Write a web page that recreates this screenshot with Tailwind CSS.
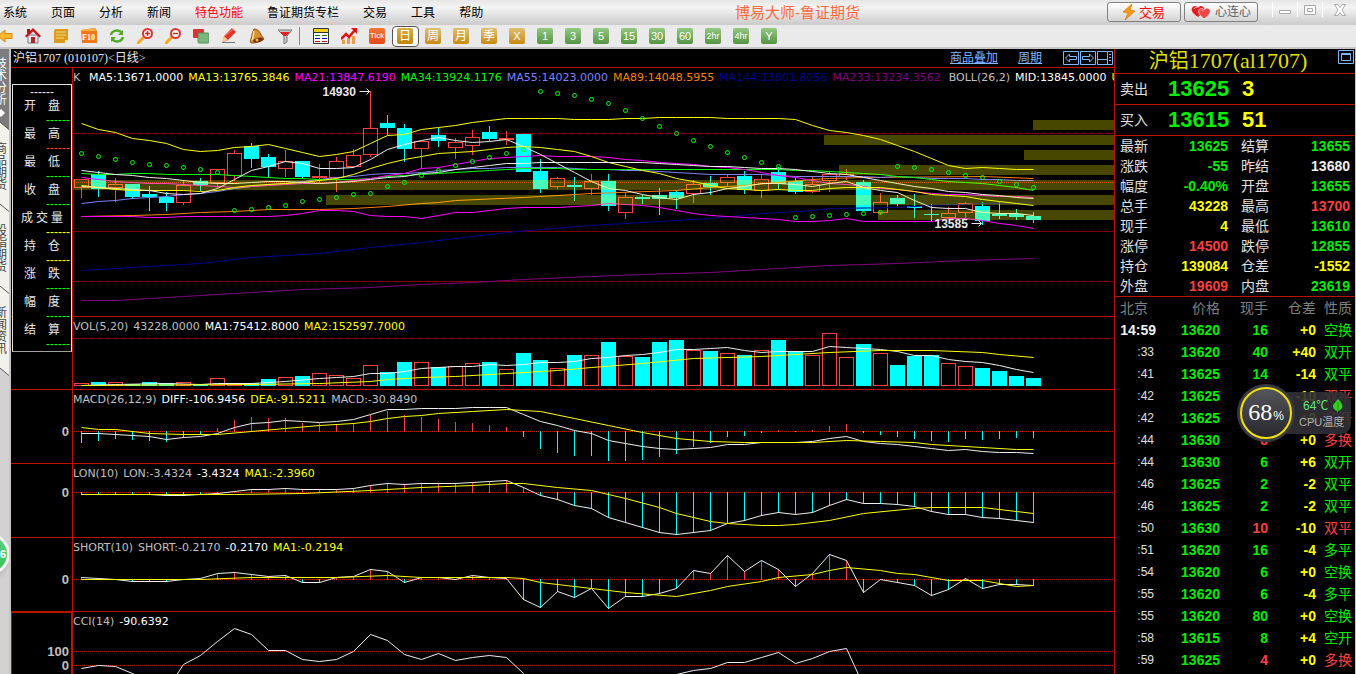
<!DOCTYPE html>
<html lang="zh-CN">
  <head>
    <meta charset="UTF-8" />
    <title>博易大师-鲁证期货</title>
    <script src="https://cdn.jsdelivr.net/npm/@tailwindcss/browser@4"></script>
  </head>
  <body class="h-screen flex flex-col overflow-hidden bg-black text-[12px] leading-none font-['Liberation_Sans','Noto_Sans_CJK_SC',sans-serif]">
    <!-- Menú principal -->
    <header class="relative flex items-center justify-between h-[25px] shrink-0 bg-linear-to-b from-[#e6e6e6] via-[#f4f4f4] via-30% to-[#cbcbcb]">
      <nav class="flex gap-6 pl-[3px] text-black">
        <a href="#">系统</a>
        <a href="#">页面</a>
        <a href="#">分析</a>
        <a href="#">新闻</a>
        <a href="#" class="text-[#ff0000]">特色功能</a>
        <a href="#">鲁证期货专栏</a>
        <a href="#">交易</a>
        <a href="#">工具</a>
        <a href="#">帮助</a>
      </nav>
      <h1 class="absolute left-[735px] text-[15px] text-[#ff6a3c]">博易大师-鲁证期货</h1>
      <div class="flex items-start gap-[3px] h-full pt-[2px]">
        <button class="flex items-center justify-center gap-1 w-[74px] h-5 border border-[#808080] rounded-[3px] bg-linear-to-b from-white to-[#d4d4d4] text-[13px] text-[#ff0000]">
          <svg class="w-3 h-4" viewBox="0 0 12 16"><path d="M9 0 0 8l5 1-3 7 10-9-5-1z" fill="#ff9a10" stroke="#c86a00" stroke-width=".6" /></svg>
          交易
        </button>
        <button class="flex items-center justify-center gap-1 w-[74px] h-5 border border-[#808080] rounded-[3px] bg-linear-to-b from-white to-[#d4d4d4] text-[12px] text-[#606060]">
          <svg class="w-5 h-4" viewBox="0 0 20 16"><path d="M7 13C1 9 0 6 1 4s4-3 6 0c2-3 5-2 6 0s0 5-6 9z" fill="#e02020" /><path d="M13 15C8 11 7 8 8 6s4-2 5 0c2-3 5-2 6 0s0 5-6 9z" fill="#f04848" stroke="#fff" stroke-width=".7" /><path d="M3 5c1-2 2-2 3-1M10 7c1-1 1-1 2 0" stroke="#ffc0c0" fill="none" /></svg>
          心连心
        </button>
        <div class="flex h-[15px] ml-[11px] text-[#a8a8a8]">
          <button aria-label="最小化" class="w-[25px] h-full border-l border-white flex items-center justify-center">
            <svg class="w-3 h-3" viewBox="0 0 12 12"><path d="M.5 6.500h11v3H.5z" fill="#fff" stroke="currentColor" /></svg>
          </button>
          <button aria-label="最大化" class="w-[25px] h-full border-l border-white flex items-center justify-center">
            <svg class="w-3 h-3" viewBox="0 0 12 12"><path d="M.5 1.500h11v9H.5zM3.500 4.500h5v3h-5z" fill="#fff" stroke="currentColor" /></svg>
          </button>
          <button aria-label="关闭" class="w-[34px] h-full border-l border-white flex items-center justify-center">
            <svg class="w-3 h-3" viewBox="0 0 12 12"><path d="M.5.5h3.500L6 3.500 8 .5h3.500L8 6l3.500 5.500H8L6 8.500 4 11.500H.5L4 6z" fill="#fff" stroke="currentColor" /></svg>
          </button>
        </div>
      </div>
    </header>

    <!-- Barra de herramientas -->
    <div class="flex items-center h-[24px] shrink-0 bg-[#eaeaea] border-b-2 border-[#c9c5c5] overflow-hidden">
      <div class="flex -ml-[9px]">
        <button aria-label="后退" class="w-7 flex justify-center"><svg class="w-4 h-4" viewBox="0 0 16 16"><path d="M1 8 8 2v3.500h7v5H8V14z" fill="#f7b731" stroke="#d08a10" /></svg></button>
        <button aria-label="首页" class="w-7 flex justify-center"><svg class="w-4 h-4" viewBox="0 0 16 16"><path d="M3 7h10v8H3z" fill="#e8e8ee" stroke="#777" /><path d="M0 8 8 0l8 8-1.500 1.500L8 3.500 1.500 9.500z" fill="#c4161c" /><path d="M2 1h3v3L2 6z" fill="#b01015" /><path d="M6 9h4v6H6z" fill="#b5222a" /></svg></button>
        <button aria-label="公告" class="w-7 flex justify-center"><svg class="w-4 h-4" viewBox="0 0 16 16"><path d="M2 1h13v11l-3 3H1V3z" fill="#dc9a20" /><path d="M3 4h10M3 7h10M3 10h8" stroke="#f8d878" /><path d="M15 12h-3v3z" fill="#fff0b0" /></svg></button>
        <button aria-label="F10" class="w-7 flex justify-center"><svg class="w-4 h-4" viewBox="0 0 16 16"><path d="M0 2 14 0l2 3v12H1z" fill="#f07818" /><path d="M0 2 14 0l1 3H0z" fill="#f8b040" /><text x="1" y="12" font-size="8" font-weight="bold" fill="#fff" font-family="Liberation Serif">F10</text></svg></button>
        <button aria-label="刷新" class="w-7 flex justify-center"><svg class="w-4 h-4" viewBox="0 0 16 16" fill="none" stroke="#4faa28" stroke-width="2.500"><path d="M2 7c1-5 8-6 11-2M14 9c-1 5-8 6-11 2" /><path d="M14 2v5H9zM2 14V9h5z" fill="#4faa28" stroke="none" /></svg></button>
        <button aria-label="放大" class="w-7 flex justify-center"><svg class="w-4 h-4" viewBox="0 0 16 16"><path d="m1 15 6-6" stroke="#f5a71c" stroke-width="3" stroke-linecap="round" /><circle cx="10.500" cy="5.500" r="4.500" fill="#fff" stroke="#e03030" stroke-width="2" /><path d="M8 5.500h5M10.500 3v5" stroke="#e02020" stroke-width="1.500" /></svg></button>
        <button aria-label="缩小" class="w-7 flex justify-center"><svg class="w-4 h-4" viewBox="0 0 16 16"><path d="m1 15 6-6" stroke="#f5a71c" stroke-width="3" stroke-linecap="round" /><circle cx="10.500" cy="5.500" r="4.500" fill="#fff" stroke="#e03030" stroke-width="2" /><path d="M8 5.500h5" stroke="#e02020" stroke-width="1.500" /></svg></button>
        <button aria-label="叠加" class="w-7 flex justify-center"><svg class="w-4 h-4" viewBox="0 0 16 16"><rect x="0" y="1" width="11" height="9" rx="1" fill="#d8343c" /><rect x="5" y="5" width="11" height="10" rx="1" fill="#7bb77c" stroke="#4e8e54" /></svg></button>
        <button aria-label="画线" class="w-7 flex justify-center"><svg class="w-4 h-4" viewBox="0 0 16 16"><path d="m2 14 1-6 8-8 4 4-8 8z" fill="#e2362c" /><path d="m4 8 8-7" stroke="#f88070" /><path d="m1 14 2-6 4 4z" fill="#f0c890" /><path d="M1 14.500h13" stroke="#777" /></svg></button>
        <button aria-label="预警" class="w-7 flex justify-center"><svg class="w-4 h-4" viewBox="0 0 16 16"><path d="M5 1c4 0 6 3 7 6l3 4c-3 3-8 4-13 4C0 13 3 10 3 6z" fill="#d8912c" stroke="#8e4c10" /><path d="M5 3c-1 3 0 6-2 9" stroke="#f8dc90" stroke-width="1.500" fill="none" /><ellipse cx="9" cy="12" rx="5" ry="2" transform="rotate(-14 9 12)" fill="#7a2a10" /><circle cx="8" cy="12" r="1.500" fill="#f0c050" /></svg></button>
        <button aria-label="筛选" class="w-7 flex justify-center"><svg class="w-4 h-4" viewBox="0 0 16 16"><path d="M1 2h14l-5 6v6l-3 2V8z" fill="#c8c8c8" stroke="#777" /><path d="M3 4h10L9 8H7z" fill="#e02020" /></svg></button>
      </div>
      <div class="w-2 flex justify-start"><span class="w-px h-[18px] bg-[#888]"></span></div>
      <div class="flex items-center">
        <button aria-label="报价" class="w-7 flex justify-center"><svg class="w-4 h-4" viewBox="0 0 16 16"><path d="M.5.5h15v15H.5z" fill="#fff" stroke="#333" /><path d="M1 2.500h14" stroke="#f4d020" stroke-width="3" /><path d="M0 4.500h16" stroke="#333" /><path d="M2 7.500h5M9 7.500h5" stroke="#008000" /><path d="M2 10.500h5M9 10.500h5" stroke="#0000c0" /><path d="M2 13.500h5M9 13.500h5" stroke="#c00000" /></svg></button>
        <button aria-label="走势" class="w-7 flex justify-center"><svg class="w-4 h-4" viewBox="0 0 16 16"><path d="M1 12h3v4H1zM6 10h3v6H6zM11 8h3v8h-3z" fill="#e8a040" /><path d="m0 11 5-5 3 3 6-7" stroke="#e01010" stroke-width="2.500" fill="none" /><path d="M10 0h6v6z" fill="#e01010" /></svg></button>
        <button class="w-7 flex justify-center"><span class="w-4 h-4 rounded-[2px] bg-linear-to-b from-[#f07838] to-[#e04818] text-white text-[8px] leading-4">Tick</span></button>
        <button class="w-7 flex justify-center"><span class="w-[27px] h-[21px] rounded-[4px] border border-[#555] bg-white flex items-center justify-center"><span class="w-4 h-4 rounded-[2px] bg-linear-to-b from-[#d9b040] to-[#c08408] text-white text-[12px] leading-4">日</span></span></button>
        <button class="w-7 flex justify-center"><span class="w-4 h-4 rounded-[2px] bg-linear-to-b from-[#dcc070] to-[#c88a00] text-white text-[12px] leading-4">周</span></button>
        <button class="w-7 flex justify-center"><span class="w-4 h-4 rounded-[2px] bg-linear-to-b from-[#dcc070] to-[#c88a00] text-white text-[12px] leading-4">月</span></button>
        <button class="w-7 flex justify-center"><span class="w-4 h-4 rounded-[2px] bg-linear-to-b from-[#dcc070] to-[#c88a00] text-white text-[12px] leading-4">季</span></button>
        <button class="w-7 flex justify-center"><span class="w-4 h-4 rounded-[2px] bg-linear-to-b from-[#dcc070] to-[#c88a00] text-white text-[11px] leading-4">X</span></button>
        <button class="w-7 flex justify-center"><span class="w-4 h-4 rounded-[2px] bg-linear-to-b from-[#94c884] to-[#549440] text-white text-[11px] leading-4">1</span></button>
        <button class="w-7 flex justify-center"><span class="w-4 h-4 rounded-[2px] bg-linear-to-b from-[#94c884] to-[#549440] text-white text-[11px] leading-4">3</span></button>
        <button class="w-7 flex justify-center"><span class="w-4 h-4 rounded-[2px] bg-linear-to-b from-[#94c884] to-[#549440] text-white text-[11px] leading-4">5</span></button>
        <button class="w-7 flex justify-center"><span class="w-4 h-4 rounded-[2px] bg-linear-to-b from-[#94c884] to-[#549440] text-white text-[11px] leading-4">15</span></button>
        <button class="w-7 flex justify-center"><span class="w-4 h-4 rounded-[2px] bg-linear-to-b from-[#94c884] to-[#549440] text-white text-[11px] leading-4">30</span></button>
        <button class="w-7 flex justify-center"><span class="w-4 h-4 rounded-[2px] bg-linear-to-b from-[#94c884] to-[#549440] text-white text-[11px] leading-4">60</span></button>
        <button class="w-7 flex justify-center"><span class="w-4 h-4 rounded-[2px] bg-linear-to-b from-[#94c884] to-[#549440] text-white text-[9px] leading-4">2hr</span></button>
        <button class="w-7 flex justify-center"><span class="w-4 h-4 rounded-[2px] bg-linear-to-b from-[#94c884] to-[#549440] text-white text-[9px] leading-4">4hr</span></button>
        <button class="w-7 flex justify-center"><span class="w-4 h-4 rounded-[2px] bg-linear-to-b from-[#94c884] to-[#549440] text-white text-[11px] leading-4">Y</span></button>
      </div>
    </div>

    <div class="flex flex-1 min-h-0">
      <!-- Pestañas laterales -->
      <aside class="relative w-[11px] shrink-0 overflow-hidden bg-[#d2d2d2] border-r-2 border-[#c9c5c5]">
        <button class="relative w-full h-[81px] overflow-hidden bg-[#7c7c7c] text-white block">
          <span class="absolute right-[2px] top-[9px] w-3 leading-3">技术分析</span>
          <svg class="absolute left-0 top-[60px] w-[5px] h-2" viewBox="0 0 5 8"><path d="m1 0 4 4-4 4-1-1V1z" fill="#fff" /></svg>
          <svg class="absolute bottom-0 right-0 w-[9px] h-2" viewBox="0 0 9 8"><path d="M0 0v8h9z" fill="#f2f2ec" /><path d="m0 0 9 7.500" stroke="#555" /></svg>
        </button>
        <button class="relative w-full h-[82px] overflow-hidden bg-[#f2f2ec] text-[#444] block">
          <span class="absolute right-[2px] top-[13px] w-3 leading-3">商品期货</span>
          <svg class="absolute bottom-0 right-0 w-[9px] h-2" viewBox="0 0 9 8"><path d="m0 0 9 7.500" stroke="#555" /></svg>
        </button>
        <button class="relative w-full h-[82px] overflow-hidden bg-[#f2f2ec] text-[#444] block">
          <span class="absolute right-[2px] top-[13px] w-3 leading-3">股指期货</span>
          <svg class="absolute bottom-0 right-0 w-[9px] h-2" viewBox="0 0 9 8"><path d="m0 0 9 7.500" stroke="#555" /></svg>
        </button>
        <button class="relative w-full h-[82px] overflow-hidden bg-[#f2f2ec] text-[#444] block">
          <span class="absolute right-[2px] top-[13px] w-3 leading-3">新闻资讯</span>
          <svg class="absolute bottom-0 right-0 w-[9px] h-2" viewBox="0 0 9 8"><path d="M0 0v8h9z" fill="#d2d2d2" /><path d="m0 0 9 7.500" stroke="#555" /></svg>
        </button>
        <div class="absolute -left-8 top-[484px] w-[42px] h-[42px] rounded-full bg-linear-to-b from-[#5fd08a] to-[#2fc050] border-3 border-[#f4f4f4] shadow-md flex items-center justify-end pr-[1px] text-white font-bold text-[11px]">6</div>
      </aside>

      <!-- Gráfico -->
      <main class="relative flex-1 min-w-0 flex flex-col">
        <div class="flex items-center justify-between h-[19px] shrink-0 border-b border-[#c01000]">
          <h2 class="pl-[2px] text-[#e8e8e8] font-['Liberation_Serif','Noto_Sans_CJK_SC',serif]">沪铝1707 (010107)&lt;日线&gt;</h2>
          <div class="flex items-center pr-px text-[#7fb8ff]">
            <a href="#" class="underline mr-5">商品叠加</a>
            <a href="#" class="underline mr-[21px]">周期</a>
            <button aria-label="左移" class="mr-px"><svg class="w-4 h-4" viewBox="0 0 16 16" fill="none" stroke="currentColor"><path d="M.5 1.500h15v13H.5zM2.500 8l4-4v2.500h7v3h-7V12z" /></svg></button>
            <button aria-label="右移" class="mr-px"><svg class="w-4 h-4" viewBox="0 0 16 16" fill="none" stroke="currentColor"><path d="M.5 1.500h15v13H.5zM13.500 8l-4-4v2.500h-7v3h7V12z" /></svg></button>
            <button aria-label="布局"><svg class="w-4 h-4" viewBox="0 0 16 16" fill="none" stroke="currentColor"><path d="M.5 1.500h15v13H.5zM10.500 1v13M.5 9.500h10M12 4.500h2M12 7.500h2M12 10.500h2" /></svg></button>
          </div>
        </div>

        <section class="flex h-[249px] shrink-0 border-b border-[#c01000]">
          <div class="w-[62px] shrink-0 border-r border-[#c01000]"></div>
          <div class="grid flex-1 min-w-0 overflow-hidden">
            <p class="[grid-area:1/1] flex gap-[5px] pt-[2px] text-[11px] leading-4 whitespace-nowrap font-['DejaVu_Sans',sans-serif] text-[#c0c0c0]">
              <span class="w-[11px]">K</span>
              <span class="text-white">MA5:13671.0000</span>
              <span class="text-[#ffff00]">MA13:13765.3846</span>
              <span class="text-[#ff00ff]">MA21:13847.6190</span>
              <span class="text-[#00ff00]">MA34:13924.1176</span>
              <span class="text-[#8080ff]">MA55:14023.0000</span>
              <span class="text-[#ff8000]">MA89:14048.5955</span>
              <span class="text-[#000090]">MA144:13801.8056</span>
              <span class="text-[#800080]">MA233:13234.3562</span>
              <span class="ml-[3px]">BOLL(26,2)</span>
              <span class="text-white">MID:13845.0000</span>
              <span class="text-[#ffff00]">UP:</span>
            </p>
            <svg id="kline" class="[grid-area:1/1] w-full h-full"></svg>
          </div>
        </section>

        <section class="flex h-[73px] shrink-0 border-b border-[#c01000]">
          <div class="w-[62px] shrink-0 border-r border-[#c01000]"></div>
          <div class="grid flex-1 min-w-0 overflow-hidden">
            <p class="[grid-area:1/1] flex gap-[5px] pt-[2px] text-[11px] leading-4 whitespace-nowrap font-['DejaVu_Sans',sans-serif] text-[#c0c0c0]">
              <span>VOL(5,20)</span>
              <span>43228.0000</span>
              <span class="text-white">MA1:75412.8000</span>
              <span class="text-[#ffff00]">MA2:152597.7000</span>
            </p>
            <svg id="vol" class="[grid-area:1/1] w-full h-full"></svg>
          </div>
        </section>

        <section class="flex h-[74px] shrink-0 border-b border-[#c01000]">
          <div class="w-[62px] shrink-0 border-r border-[#c01000] pr-[3px] pt-[35px] text-right font-bold text-[13px] text-[#c0c0c0]">0</div>
          <div class="grid flex-1 min-w-0 overflow-hidden">
            <p class="[grid-area:1/1] flex gap-[5px] pt-[2px] text-[11px] leading-4 whitespace-nowrap font-['DejaVu_Sans',sans-serif] text-[#c0c0c0]">
              <span>MACD(26,12,9)</span>
              <span class="text-white">DIFF:-106.9456</span>
              <span class="text-[#ffff00]">DEA:-91.5211</span>
              <span>MACD:-30.8490</span>
            </p>
            <svg id="macd" class="[grid-area:1/1] w-full h-full"></svg>
          </div>
        </section>

        <section class="flex h-[74px] shrink-0 border-b border-[#c01000]">
          <div class="w-[62px] shrink-0 border-r border-[#c01000] pr-[3px] pt-[22px] text-right font-bold text-[13px] text-[#c0c0c0]">0</div>
          <div class="grid flex-1 min-w-0 overflow-hidden">
            <p class="[grid-area:1/1] flex gap-[5px] pt-[2px] text-[11px] leading-4 whitespace-nowrap font-['DejaVu_Sans',sans-serif] text-[#c0c0c0]">
              <span>LON(10)</span>
              <span>LON:-3.4324</span>
              <span class="text-white">-3.4324</span>
              <span class="text-[#ffff00]">MA1:-2.3960</span>
            </p>
            <svg id="lon" class="[grid-area:1/1] w-full h-full"></svg>
          </div>
        </section>

        <section class="flex h-[74px] shrink-0 border-b border-[#c01000]">
          <div class="w-[62px] shrink-0 border-r border-[#c01000] pr-[3px] pt-[35px] text-right font-bold text-[13px] text-[#c0c0c0]">0</div>
          <div class="grid flex-1 min-w-0 overflow-hidden">
            <p class="[grid-area:1/1] flex gap-[5px] pt-[2px] text-[11px] leading-4 whitespace-nowrap font-['DejaVu_Sans',sans-serif] text-[#c0c0c0]">
              <span>SHORT(10)</span>
              <span>SHORT:-0.2170</span>
              <span class="text-white">-0.2170</span>
              <span class="text-[#ffff00]">MA1:-0.2194</span>
            </p>
            <svg id="short" class="[grid-area:1/1] w-full h-full"></svg>
          </div>
        </section>

        <section class="flex flex-1 min-h-0 overflow-hidden">
          <div class="w-[62px] shrink-0 border-t border-l border-r-2 border-[#c01000] pr-[2px] pt-[32px] text-right font-bold text-[13px] leading-[14px] text-[#c0c0c0]">100<br />0</div>
          <div class="grid flex-1 min-w-0 overflow-hidden">
            <p class="[grid-area:1/1] flex gap-[5px] pt-[2px] text-[11px] leading-4 whitespace-nowrap font-['DejaVu_Sans',sans-serif] text-[#c0c0c0]">
              <span>CCI(14)</span>
              <span class="text-white">-90.6392</span>
            </p>
            <svg id="cci" class="[grid-area:1/1] w-full h-full"></svg>
          </div>
        </section>

        <!-- Ventana flotante del cursor -->
        <div class="absolute left-px top-[35px] w-[60px] border border-[#e0e0e0] border-b-[#a0a0a0] bg-black text-[#e8e8e8] leading-[14px]">
          <p class="text-center">------</p>
          <p class="flex justify-between px-[11px]"><span>开</span><span>盘</span></p>
          <p class="text-right pr-px text-[#00ff00]">------</p>
          <p class="flex justify-between px-[11px]"><span>最</span><span>高</span></p>
          <p class="text-right pr-px text-[#ff4040]">------</p>
          <p class="flex justify-between px-[11px]"><span>最</span><span>低</span></p>
          <p class="text-right pr-px text-[#00ff00]">------</p>
          <p class="flex justify-between px-[11px]"><span>收</span><span>盘</span></p>
          <p class="text-right pr-px text-[#00ff00]">------</p>
          <p class="flex justify-between px-2"><span>成</span><span>交</span><span>量</span></p>
          <p class="text-right pr-px text-[#ffff00]">------</p>
          <p class="flex justify-between px-[11px]"><span>持</span><span>仓</span></p>
          <p class="text-right pr-px text-[#ffff00]">------</p>
          <p class="flex justify-between px-[11px]"><span>涨</span><span>跌</span></p>
          <p class="text-right pr-px text-[#00ff00]">------</p>
          <p class="flex justify-between px-[11px]"><span>幅</span><span>度</span></p>
          <p class="text-right pr-px text-[#00ff00]">------</p>
          <p class="flex justify-between px-[11px]"><span>结</span><span>算</span></p>
          <p class="text-right pr-px text-[#00ff00]">------</p>
        </div>
      </main>

      <!-- Panel de cotización -->
      <aside class="relative w-[242px] shrink-0 flex flex-col border-l border-[#c01000] border-r border-r-[#c9c5c5] text-[14px] text-[#e0e0e0]">
        <div class="relative flex items-center justify-center h-[25px] shrink-0 border-b border-[#c01000] pr-[14px]">
          <h2 class="text-[20px] text-[#e0e000] font-['Liberation_Serif','Noto_Sans_CJK_SC',serif]">沪铝<span class="text-[22px]">1707(al1707)</span></h2>
          <button aria-label="最大化" class="absolute right-px top-px text-[#7fb8ff]"><svg class="w-4 h-[14px]" viewBox="0 0 16 14" fill="none" stroke="currentColor"><path d="M.5.5h15v13H.5zM3.500 3.500h9v7h-9zM3 4.500h10" /></svg></button>
        </div>
        <div class="flex items-center h-[31px] shrink-0 border-b border-[#c01000] pl-[5px]">
          <span class="w-12">卖出</span>
          <b class="w-[74px] text-[22px] text-[#00ee00]">13625</b>
          <b class="text-[22px] text-[#ffff00]">3</b>
        </div>
        <div class="flex items-center h-[31px] shrink-0 border-b border-[#c01000] pl-[5px]">
          <span class="w-12">买入</span>
          <b class="w-[74px] text-[22px] text-[#00ee00]">13615</b>
          <b class="text-[22px] text-[#ffff00]">51</b>
        </div>
        <table class="w-full shrink-0 table-fixed border-b border-[#c01000]">
          <colgroup><col class="w-[36px]" /><col class="w-[77px]" /><col class="w-[46px]" /><col /></colgroup>
          <tbody id="quote"></tbody>
        </table>
        <table class="w-full table-fixed">
          <colgroup><col class="w-[41px]" /><col class="w-[64px]" /><col class="w-[48px]" /><col class="w-[48px]" /><col /></colgroup>
          <thead>
            <tr class="h-[22px] text-[#808080]">
              <th class="font-normal text-left pl-[5px]">北京</th>
              <th class="font-normal text-right">价格</th>
              <th class="font-normal text-right">现手</th>
              <th class="font-normal text-right">仓差</th>
              <th class="font-normal text-right pr-[3px]">性质</th>
            </tr>
          </thead>
          <tbody id="ticks"></tbody>
        </table>

        <!-- Medidor de CPU -->
        <div class="absolute left-[122px] top-[335px] flex items-center">
          <div class="z-10 w-[58px] h-[58px] rounded-full bg-[#3a3a42] p-[3px]">
            <div class="w-full h-full rounded-full border-2 border-[#f0e010] bg-linear-to-b from-[#55555c] to-[#28282e] flex items-baseline justify-center gap-px pt-[11px] text-white">
              <span class="text-[24px] font-['Liberation_Serif',serif]">68</span><span class="text-[12px]">%</span>
            </div>
          </div>
          <div class="-ml-2 w-[64px] h-[42px] rounded-r-[10px] bg-[#303036]/90 pl-3 pt-[6px] text-[11px]">
            <p class="flex items-center pl-1 gap-[5px] h-4 text-[#60e870] text-[12px]">64℃
              <svg class="w-[10px] h-[14px]" viewBox="0 0 10 14"><path d="M5 0c4 4 5 7 4 9s-3 3-4 3l-1 2 0-2C1 11 0 9 0 7s2-3 5-7z" fill="#38d020" /><path d="M5 3v9" stroke="#188010" stroke-width=".7" /></svg>
            </p>
            <p class="leading-4 whitespace-nowrap text-[#b0b0b0]">CPU温度</p>
          </div>
        </div>
      </aside>
    </div>

    <script>
      const CYAN = '#00ffff', RED = '#ff4040', YELLOW = '#ffff00', WHITE = '#f0f0f0';
      const LEFT = 73; // borde izquierdo de la zona de dibujo
      const px = i => 81 + 17 * i;

      // Cada vela: tipo (u = sube, d = baja), techo, base, máximo, mínimo
      const velas = `u179,187,179,197 d174,189,171,196 u184,187,178,201 d184,197,184,198 d194,197,186,210 d197,203,192,210
        u185,202,180,204 d181,185,178,190 u169,182,169,187 u153,175,150,180 d146,159,143,167 d157,167,154,177 u161,168,150,176
        d161,177,161,178 u176,177,164,182 u161,177,157,191 u155,166,149,167 u128,154,91,156 d123,128,115,134 d128,149,124,161
        u141,148,141,168 d135,141,128,146 u142,147,138,158 u137,145,130,154 d132,139,126,140 u138,139,131,144 d134,172,134,172
        d171,189,159,192 u178,186,177,188 d185,187,177,200 u181,188,174,194 d181,206,174,210 u197,212,192,218 d197,199,195,203
        d195,199,188,214 d192,198,190,208 u184,193,180,202 d183,187,176,194 u177,182,174,185 d176,190,171,193 u179,190,174,197
        d172,184,167,188 d181,192,178,193 u184,191,176,192 u174,180,171,191 u174,176,169,179 d182,211,180,211 u202,212,193,213
        d198,204,195,205 d206,208,194,217 d214,215,204,220 u213,217,207,217 u203,212,202,217 d206,221,202,224 d214,216,202,218
        d214,217,209,219 d216,220,212,222`.trim().split(/\s+/).map(s => [s[0], ...s.slice(1).split(',').map(Number)]);

      const ma5 = [186,187,188,189,190,193,194,193,188,179,170,166,161,163,168,168,167,159,149,144,140,137,140,142,141,139,146,154,163,172,181,188,190,194,197,199,194,192,188,186,183,183,184,186,183,181,187,190,192,200,207,208,208,212,213,213,215];
      const ma13 = [185,187,189,190,190,190,190,191,190,187,185,184,183,182,180,178,174,168,163,159,156,153,152,151,149,147,146,147,149,151,156,162,166,170,173,178,181,185,188,189,190,189,190,190,188,187,187,187,189,191,194,195,196,199,201,203,205];
      const ma21 = [177,179,181,182,183,183,184,185,186,187,186,185,184,183,183,182,180,178,175,173,168,167,164,161,158,157,156,155,156,156,156,157,159,160,162,163,164,166,167,169,172,175,177,180,183,184,186,188,189,191,193,194,194,195,196,196,197];
      const ma34 = [173,174,174,173,173,174,174,174,174,175,176,177,178,178,179,179,179,178,176,175,174,173,172,171,170,169,168,168,168,169,169,169,169,169,169,169,169,169,169,169,169,169,170,170,171,172,173,174,176,177,179,181,182,183,185,187,190];
      const ma55 = [203,201,200,198,197,196,194,193,191,188,186,184,183,181,179,177,176,174,173,173,172,170,169,168,168,167,167,167,167,168,169,169,170,170,171,172,173,174,174,174,174,175,176,176,176,176,176,177,176,177,178,178,178,179,179,180,180];
      const ma89 = [[0,216],[3,215],[5,214],[7,212],[9,211],[11,209],[14,209],[16,208],[18,206],[20,203],[21,202],[22,200],[26,197],[30,193],[35,190],[37,187],[39,185],[41,182],[43,179],[44,178],[46,177],[53,176],[56,178]];
      const ma144 = [[0,270],[2,268],[4,266],[7,263],[10,257],[14,253],[17,247],[20,242],[22,238],[25,232],[27,229],[30,225],[34,221],[37,218],[40,213],[43,210],[44,208],[48,207],[50,205],[53,203],[56,202]];
      const ma233 = [[0,300],[2,300],[6,296],[10,292],[13,289],[17,287],[20,284],[23,282],[26,279],[30,276],[33,274],[37,272],[40,269],[44,265],[48,263],[52,260],[56,258]];
      const bollMid = [170,172,174,175,177,178,180,182,183,183,182,181,181,182,183,182,181,179,177,176,173,172,169,167,165,163,163,162,162,162,162,162,162,162,163,164,165,166,166,167,168,168,169,171,173,174,177,180,183,186,188,191,192,194,195,197,198];
      const bollUp = [123,129,132,138,140,143,149,151,150,147,146,144,148,152,156,154,151,143,135,134,129,127,125,122,120,118,118,118,118,119,119,119,118,118,117,117,117,117,118,118,118,118,119,125,130,132,135,139,145,151,158,165,168,167,168,169,169];
      const bollDown = [216,216,216,216,217,217,216,216,216,216,216,216,215,213,210,210,211,215,216,216,218,215,212,212,210,208,207,207,207,206,205,203,204,205,207,210,213,215,216,217,218,219,221,221,220,218,221,221,221,221,221,218,218,220,223,225,228];
      const sar = [153,156,159,162,164,165,167,169,172,210,209,207,205,201,199,197,194,193,186,182,175,170,165,161,157,153,149,91,93,95,99,103,110,118,126,133,140,146,152,157,162,166,217,216,215,214,213,212,166,167,169,172,175,177,181,184,187];
      // Zonas de precio: x inicial, y
      const zonas = [[1033,120],[824,135],[1024,150],[839,165],[73,180],[326,195],[878,210]];

      const vol = [383,382,382,384,382,383,382,384,378,383,383,379,377,376,373,375,378,365,372,362,362,367,366,363,362,369,353,360,368,355,355,342,356,357,342,340,350,351,353,355,350,340,351,355,333,357,344,353,365,356,355,363,366,368,371,376,378];
      const volMa1 = [[0,385],[2,384],[5,383],[7,384],[8,383],[10,383],[12,381],[14,378],[15,377],[16,376],[17,373],[18,373],[19,371],[20,368],[22,366],[23,366],[24,364],[25,365],[26,364],[27,362],[28,362],[29,361],[30,358],[31,357],[32,355],[33,354],[34,352],[35,349],[36,349],[37,348],[38,347],[39,350],[40,352],[41,351],[43,351],[44,346],[45,347],[46,348],[47,349],[48,351],[49,355],[50,355],[51,359],[52,361],[53,362],[54,365],[55,369],[56,372]];
      const volMa2 = [[0,385],[10,384],[14,383],[17,381],[18,379],[20,377],[22,376],[24,374],[25,373],[27,371],[28,370],[30,367],[33,363],[36,358],[40,356],[41,355],[44,352],[47,350],[50,350],[53,352],[54,354],[56,357]];

      const macd = [442,440,438,439,440,441,437,434,428,420,417,418,418,423,423,424,423,415,411,415,417,419,422,423,425,427,436,448,452,455,455,460,460,459,456,453,446,442,436,435,432,430,431,430,426,424,432,434,436,438,440,441,438,439,438,437,437];
      const diff = [433,433,434,435,436,439,437,436,433,427,423,422,420,421,422,421,419,414,409,409,408,408,408,407,407,407,414,421,425,430,433,440,443,446,448,449,448,447,444,444,442,442,442,441,438,436,441,443,444,446,448,450,449,451,452,452,453];
      const dea = [[0,427],[1,429],[2,429],[4,433],[6,434],[8,434],[10,431],[12,428],[14,425],[16,423],[17,421],[18,418],[19,416],[20,415],[21,413],[23,411],[25,409],[27,411],[29,418],[31,425],[33,432],[35,438],[37,441],[39,442],[43,442],[45,440],[47,441],[49,442],[50,444],[53,447],[55,449],[56,449]];

      const lon = [494,494,494,494,494,495,495,494,493,491,489,489,488,489,489,489,488,485,483,484,483,483,483,482,481,480,487,495,499,505,508,517,522,527,532,534,532,530,523,520,515,512,514,512,505,499,503,503,504,506,511,514,514,517,518,520,522];
      const lonMa = [[0,494],[9,494],[13,493],[17,490],[20,487],[23,485],[25,483],[26,483],[28,487],[30,490],[32,498],[34,507],[35,513],[37,521],[38,523],[40,525],[41,525],[42,524],[44,520],[46,513],[49,508],[50,507],[53,507],[54,509],[56,513]];

      const corto = [577,578,579,581,581,581,579,578,573,572,574,576,575,582,582,577,576,569,571,582,577,577,579,575,577,578,599,607,591,597,588,608,596,596,593,588,570,573,555,571,560,569,586,573,554,560,592,579,582,585,595,589,578,588,584,584,585];
      const cortoMa = [[0,579],[7,579],[10,577],[15,577],[18,575],[20,577],[25,577],[26,578],[27,582],[29,586],[32,592],[35,596],[37,590],[38,586],[40,581],[41,577],[43,574],[44,570],[45,567],[47,570],[48,573],[49,574],[51,580],[53,580],[55,586],[56,585]];

      const cci = [668,665,666,673,681,690,664,655,641,628,634,650,650,659,661,659,651,634,640,654,659,653,660,657,655,657,673,690,700,700,700,700,700,700,690,674,670,668,662,662,657,652,663,658,651,648,685];

      const linea = (datos, color) =>
        `<polyline fill="none" stroke="${color}" points="${datos.map((d, i) => Array.isArray(d) ? px(d[0]) + ',' + d[1] : px(i) + ',' + d).join(' ')}"/>`;
      const guia = (y, color = '#900000') =>
        `<line x1="${LEFT}" x2="3000" y1="${y}" y2="${y}" stroke="${color}" stroke-dasharray="1 1" shape-rendering="crispEdges"/>`;
      const vertical = (x, y1, y2, color) =>
        `<path d="M${x} ${y1 - 0.5}V${y2 + 0.5}" stroke="${color}"/>`;
      const caja = (i, arriba, abajo, baja) => {
        const alto = Math.max(abajo - arriba - (baja ? 1 : 0), 0.01);
        return `<rect x="${px(i) - 7}" y="${arriba}" width="14" height="${alto}" fill="${baja ? CYAN : 'none'}" stroke="${baja ? CYAN : RED}"/>`;
      };
      const barras = (datos, cero) =>
        datos.map((y, i) => vertical(px(i), Math.min(y, cero), Math.max(y, cero), y < cero ? RED : CYAN)).join('');
      const pintar = (id, top, contenido) => {
        document.getElementById(id).innerHTML = `<g transform="translate(${0.5 - LEFT} ${0.5 - top})">${contenido}</g>`;
      };

      pintar('kline', 68,
        guia(133) + guia(182, '#c02000') + guia(231) + guia(281) +
        velas.map(([t, a, b, max, min], i) =>
          caja(i, a, b, t === 'd') +
          (max < a ? vertical(px(i), max, a, t === 'd' ? CYAN : RED) : '') +
          (min > b ? vertical(px(i), b, min, t === 'd' ? CYAN : RED) : '')).join('') +
        linea(ma233, '#800080') + linea(ma144, '#000090') + linea(ma89, '#ff8000') + linea(ma55, '#8080ff') +
        linea(ma34, '#00ff00') + linea(ma21, '#ff00ff') + linea(ma13, YELLOW) + linea(bollMid, WHITE) +
        linea(bollUp, YELLOW) + linea(bollDown, '#ff00ff') + linea(ma5, WHITE) +
        zonas.map(([x, y]) => `<rect x="${x - 0.5}" y="${y - 0.5}" width="3000" height="10" fill="#ffff00" fill-opacity=".28"/>`).join('') +
        sar.map((y, i) => `<circle cx="${px(i)}" cy="${y}" r="2" fill="none" stroke="#00ff00"/>`).join('') +
        `<g fill="#e8e8e8" font-family="Liberation Sans" font-size="12" font-weight="bold">
          <text x="322" y="95">14930</text><text x="934" y="227">13585</text></g>
        <path d="M359 91h10M366 88l3 3-3 3M971 223h10M978 220l3 3-3 3" stroke="#e8e8e8" fill="none"/>`);

      pintar('vol', 317,
        guia(338) + vol.map((y, i) => caja(i, y, velas[i][0] === 'd' ? 386 : 385, velas[i][0] === 'd')).join('') +
        linea(volMa1, WHITE) + linea(volMa2, YELLOW));
      pintar('macd', 390, guia(431, '#c02000') + barras(macd, 431) + linea(diff, WHITE) + linea(dea, YELLOW));
      pintar('lon', 464, guia(492, '#c02000') + barras(lon, 492) + linea(lon, WHITE) + linea(lonMa, YELLOW));
      pintar('short', 538, guia(579, '#c02000') + barras(corto, 579) + linea(corto, WHITE) + linea(cortoMa, YELLOW));
      pintar('cci', 612, guia(651, '#c02000') + guia(665, '#c02000') + linea(cci, WHITE));

      // Tablas del panel derecho
      const clase = { v: 'text-[#00ee00]', r: 'text-[#ff4040]', a: 'text-[#ffff00]', b: 'text-[#f0f0f0]' };

      document.getElementById('quote').innerHTML = [
        ['最新', '13625', 'v', '结算', '13655', 'v'],
        ['涨跌', '-55', 'v', '昨结', '13680', 'b'],
        ['幅度', '-0.40%', 'v', '开盘', '13655', 'v'],
        ['总手', '43228', 'a', '最高', '13700', 'r'],
        ['现手', '4', 'a', '最低', '13610', 'v'],
        ['涨停', '14500', 'r', '跌停', '12855', 'v'],
        ['持仓', '139084', 'a', '仓差', '-1552', 'a'],
        ['外盘', '19609', 'r', '内盘', '23619', 'v'],
      ].map(f => `<tr class="h-5">
          <th class="font-normal text-left pl-[5px]">${f[0]}</th><td class="text-right font-bold ${clase[f[2]]}">${f[1]}</td>
          <th class="font-normal text-left pl-[13px]">${f[3]}</th><td class="text-right font-bold pr-[5px] ${clase[f[5]]}">${f[4]}</td>
        </tr>`).join('');

      document.getElementById('ticks').innerHTML = [
        ['14:59', '13620', '16', '+0', '空换', 'v'],
        [':33', '13620', '40', '+40', '双开', 'v'],
        [':41', '13625', '14', '-14', '双平', 'v'],
        [':42', '13625', '10', '-10', '双平', 'r'],
        [':42', '13625', '32', '+2', '多开', 'r'],
        [':44', '13630', '8', '+0', '多换', 'r'],
        [':44', '13630', '6', '+6', '双开', 'v'],
        [':46', '13625', '2', '-2', '双平', 'v'],
        [':46', '13625', '2', '-2', '双平', 'v'],
        [':50', '13630', '10', '-10', '双平', 'r'],
        [':51', '13620', '16', '-4', '多平', 'v'],
        [':54', '13620', '6', '+0', '空换', 'v'],
        [':55', '13620', '6', '-4', '多平', 'v'],
        [':55', '13620', '80', '+0', '空换', 'v'],
        [':58', '13615', '8', '+4', '空开', 'v'],
        [':59', '13625', '4', '+0', '多换', 'r'],
      ].map((f, i) => `<tr class="h-[22px]">
          <td class="text-right ${i ? 'text-[12px] pr-[2px]' : 'font-bold text-[#f0f0f0]'}">${f[0]}</td>
          <td class="text-right font-bold text-[#00ee00]">${f[1]}</td>
          <td class="text-right font-bold ${clase[f[5]]}">${f[2]}</td>
          <td class="text-right font-bold text-[#ffff00]">${f[3]}</td>
          <td class="text-right pr-[3px] ${clase[f[5]]}">${f[4]}</td>
        </tr>`).join('');
    </script>
  </body>
</html>
